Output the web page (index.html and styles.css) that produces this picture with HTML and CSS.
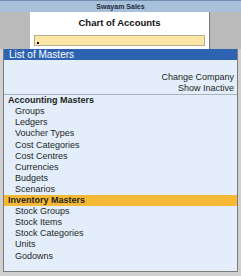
FILE: index.html
```
<!DOCTYPE html>
<html lang="en">

<head>
    <meta charset="UTF-8">
    <meta name="viewport" content="width=device-width, initial-scale=1.0">
    <title>List of Masters</title>
    <link rel="stylesheet" href="styles.css">
</head>

<body>
    <!-- company title bar -->
    <div class="title-bar">Swayam Sales</div>

    <!-- report box with the search input -->
    <div class="top-area">
        <div class="report-box">
            <div class="report-title">Chart of Accounts</div>
            <div class="report-input"><span class="cursor"></span></div>
        </div>
    </div>

    <!-- list of masters panel -->
    <div class="masters">
        <div class="masters-header">List of Masters</div>
        <div class="masters-body">
            <div class="actions">
                <div>Change Company</div>
                <div>Show Inactive</div>
            </div>
            <div class="group-title">Accounting Masters</div>
            <div class="item">Groups</div>
            <div class="item">Ledgers</div>
            <div class="item">Voucher Types</div>
            <div class="item">Cost Categories</div>
            <div class="item">Cost Centres</div>
            <div class="item">Currencies</div>
            <div class="item">Budgets</div>
            <div class="item">Scenarios</div>
            <div class="group-title selected">Inventory Masters</div>
            <div class="item">Stock Groups</div>
            <div class="item">Stock Items</div>
            <div class="item">Stock Categories</div>
            <div class="item">Units</div>
            <div class="item">Godowns</div>
        </div>
    </div>
</body>

</html>
```

FILE: styles.css
```
/* page */
body {
    margin: 0;
    width: 241px;
    height: 276px;
    font-family: "Liberation Sans", Arial, sans-serif;
    background-color: #d0d0d0;
    overflow: hidden;
}

/* company title bar */
.title-bar {
    height: 11px;
    border-top: 1px solid #6f8fb0;
    background-color: #a8c0d8;
    color: #1c2c48;
    text-align: center;
    font-size: 7px;
    font-weight: bold;
    line-height: 11px;
}

/* grey area behind the report box */
.top-area {
    height: 37px;
    background-color: #bababa;
    padding-left: 30px;
}

.report-box {
    width: 180px;
    height: 37px;
    box-sizing: border-box;
    background-color: #fff;
    border-right: 1px solid #7a7a7a;
    padding: 5px 4px 0 4px;
}

.report-title {
    text-align: center;
    font-size: 9.5px;
    font-weight: bold;
    color: #111;
    line-height: 12px;
    margin-bottom: 6px;
}

.report-input {
    height: 11px;
    box-sizing: border-box;
    background-color: #fde7a6;
    border: 1px solid #b8ae8c;
    position: relative;
}

.cursor {
    position: absolute;
    left: 2px;
    bottom: 1px;
    width: 2px;
    height: 2px;
    background-color: #000;
}

/* list of masters */
.masters {
    margin: 0 3px;
    border: 1px solid #7c7c7c;
    border-top: none;
    background-color: #e3eefa;
}

.masters-header {
    height: 11px;
    background-color: #2d63b0;
    color: #fff;
    font-size: 10px;
    line-height: 11px;
    padding-left: 5px;
}

.masters-body {
    height: 211px;
    font-size: 9px;
    line-height: 11.1px;
    color: #1e1e1e;
}

.actions {
    text-align: right;
    padding: 12px 3px 0 0;
    border-bottom: 1px solid #a9b2bc;
}

.group-title {
    font-weight: bold;
    padding-left: 4px;
}

.group-title.selected {
    background-color: #f6b935;
}

.item {
    padding-left: 11px;
}
```
